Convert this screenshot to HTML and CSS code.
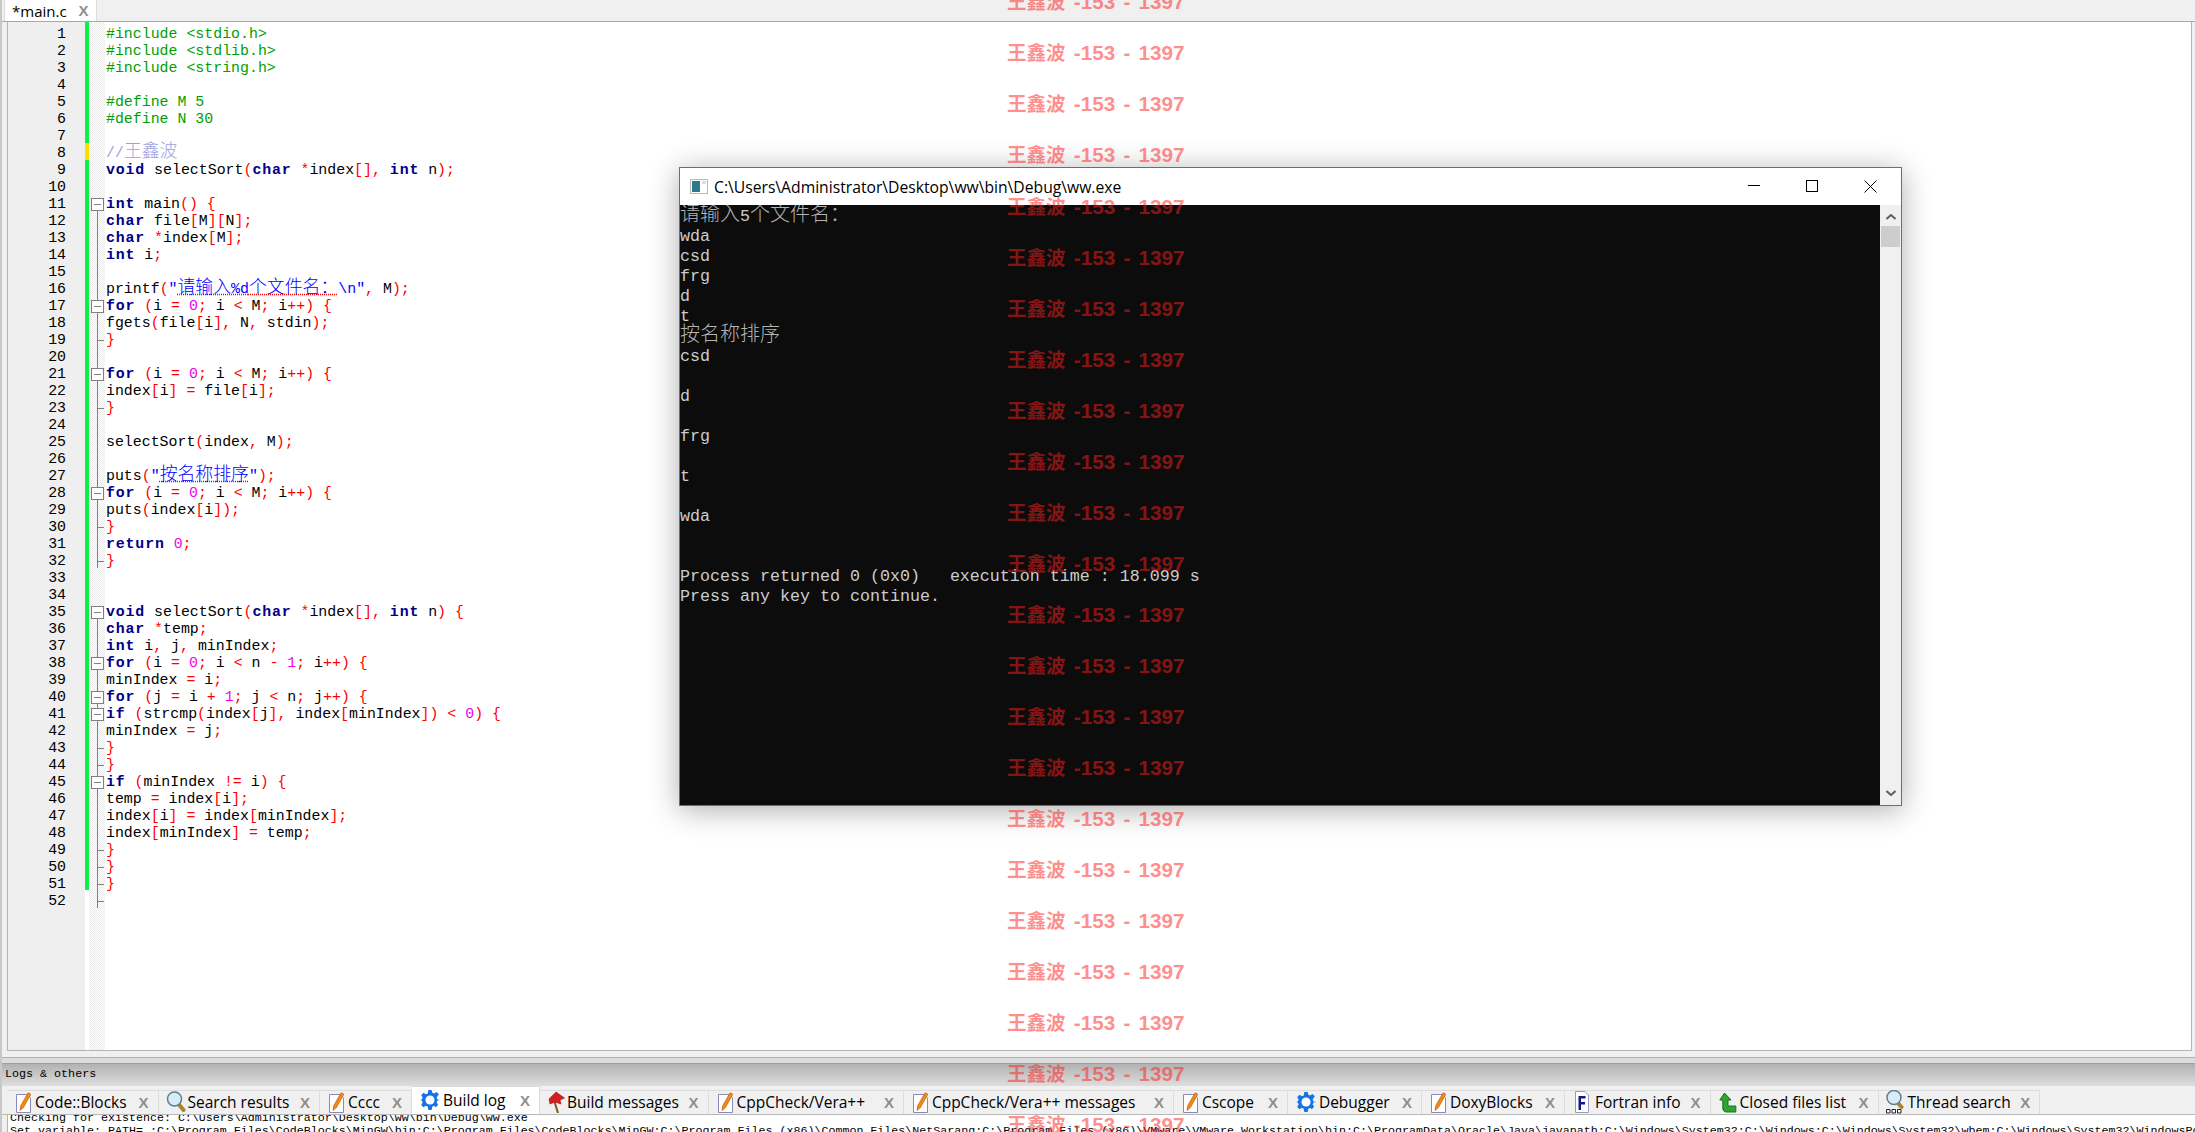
FILE: index.html
```html
<!DOCTYPE html>
<html lang="zh">
<head>
<meta charset="utf-8">
<title>main.c</title>
<link rel="stylesheet" href="styles.css">
</head>
<body>
<svg class="defs" width="0" height="0" aria-hidden="true">
  <symbol id="i-pencil" viewBox="0 0 15 21">
    <path d="M.5 2.500H11l3.500 3.500v14.500H.500z" fill="#fff" stroke="#8a8ab8"/>
    <path d="M12 .800l2.800 1.400L7.500 15.500l-3.500 3 .6-4.500z" fill="#f08a1d" stroke="#c65c00" stroke-width=".7"/>
  </symbol>
  <symbol id="i-gear" viewBox="0 0 24 24">
    <path d="M10 0h4l.7 3.200 2.300 1 2.800-1.800 2.800 2.800L20 9l1 2.300 3 .7v0l-3 .7-1 2.300 1.800 2.800-2.800 2.800L17 19l-2.300 1-.7 4h-4l-.7-4L7 19l-2.800 1.800-2.800-2.800L3.200 15l-1-2.300L0 12l2.200-.7 1-2.300L1.400 6.200l2.800-2.800L7 5.200l2.300-1z" fill="#1473e6"/>
    <circle cx="12" cy="12" r="5.500" fill="#fff"/>
  </symbol>
  <symbol id="i-search" viewBox="0 0 20 22">
    <path d="M12.500 13l5 6" stroke="#a8862a" stroke-width="4" stroke-linecap="round"/>
    <circle cx="8.500" cy="8" r="7" fill="#d8ecf6" stroke="#5e7f95" stroke-width="1.500"/>
  </symbol>
  <symbol id="i-flag" viewBox="0 0 17 22">
    <path d="M6 9l4 13" stroke="#7a5a20" stroke-width="2"/>
    <path d="M1 8l7-7 8.500 6-4.500 2 1 4-6-2-5 2z" fill="#d21f1f" stroke="#9c1010" stroke-width=".6"/>
  </symbol>
  <symbol id="i-fortran" viewBox="0 0 14 22">
    <path d="M.5.500H10l3.500 3.500v17.500H.500z" fill="#fff" stroke="#9a9ab8"/>
    <path d="M3.500 5h7v2.500H6V11h4v2.500H6V19H3.500z" fill="#16168c"/>
  </symbol>
  <symbol id="i-arrow" viewBox="0 0 18 21">
    <path d="M5.500 1L.8 8h3v8c0 2.500 1.500 4 4 4h9v-6H9V8h3z" fill="#2ea52e" stroke="#1c701c"/>
  </symbol>
  <symbol id="i-thread" viewBox="0 0 18 24">
    <path d="M11 12l4.500 5" stroke="#a8862a" stroke-width="4" stroke-linecap="round"/>
    <circle cx="8" cy="7.500" r="7" fill="#d8ecf6" stroke="#5e7f95" stroke-width="1.500"/>
    <path d="M.5 19.500h3.500V23H.500zM6 19.500h3.500V23H6zM11.500 19.500H15V23h-3.500z" fill="#fff" stroke="#222"/>
  </symbol>
</svg>

<div class="ide">
  <div class="top-tabs">
    <div class="file-tab"><span>*main.c</span><b class="file-x">X</b></div>
  </div>

  <div class="editor">
    <div class="gutter" id="gutter"></div>
    <div class="changes"><i class="yellow"></i></div>
    <div class="folds" id="folds"></div>
    <pre class="code"><span class="pp">#include &lt;stdio.h&gt;</span>
<span class="pp">#include &lt;stdlib.h&gt;</span>
<span class="pp">#include &lt;string.h&gt;</span>

<span class="pp">#define M 5</span>
<span class="pp">#define N 30</span>

<span class="cm">//<span class="zh">王鑫波</span></span>
<b>void</b> selectSort<i>(</i><b>char</b> <i>*</i>index<i>[],</i> <b>int</b> n<i>);</i>

<b>int</b> main<i>()</i> <i>{</i>
<b>char</b> file<i>[</i>M<i>][</i>N<i>];</i>
<b>char</b> <i>*</i>index<i>[</i>M<i>];</i>
<b>int</b> i<i>;</i>

printf<i>(</i><span class="st">"<u><span class="zh">请输入</span>%d<span class="zh">个文件名：</span></u>\n"</span><i>,</i> M<i>);</i>
<b>for</b> <i>(</i>i <i>=</i> <em>0</em><i>;</i> i <i>&lt;</i> M<i>;</i> i<i>++)</i> <i>{</i>
fgets<i>(</i>file<i>[</i>i<i>],</i> N<i>,</i> stdin<i>);</i>
<i>}</i>

<b>for</b> <i>(</i>i <i>=</i> <em>0</em><i>;</i> i <i>&lt;</i> M<i>;</i> i<i>++)</i> <i>{</i>
index<i>[</i>i<i>]</i> <i>=</i> file<i>[</i>i<i>];</i>
<i>}</i>

selectSort<i>(</i>index<i>,</i> M<i>);</i>

puts<i>(</i><span class="st">"<u><span class="zh">按名称排序</span></u>"</span><i>);</i>
<b>for</b> <i>(</i>i <i>=</i> <em>0</em><i>;</i> i <i>&lt;</i> M<i>;</i> i<i>++)</i> <i>{</i>
puts<i>(</i>index<i>[</i>i<i>]);</i>
<i>}</i>
<b>return</b> <em>0</em><i>;</i>
<i>}</i>


<b>void</b> selectSort<i>(</i><b>char</b> <i>*</i>index<i>[],</i> <b>int</b> n<i>)</i> <i>{</i>
<b>char</b> <i>*</i>temp<i>;</i>
<b>int</b> i<i>,</i> j<i>,</i> minIndex<i>;</i>
<b>for</b> <i>(</i>i <i>=</i> <em>0</em><i>;</i> i <i>&lt;</i> n <i>-</i> <em>1</em><i>;</i> i<i>++)</i> <i>{</i>
minIndex <i>=</i> i<i>;</i>
<b>for</b> <i>(</i>j <i>=</i> i <i>+</i> <em>1</em><i>;</i> j <i>&lt;</i> n<i>;</i> j<i>++)</i> <i>{</i>
<b>if</b> <i>(</i>strcmp<i>(</i>index<i>[</i>j<i>],</i> index<i>[</i>minIndex<i>])</i> <i>&lt;</i> <em>0</em><i>)</i> <i>{</i>
minIndex <i>=</i> j<i>;</i>
<i>}</i>
<i>}</i>
<b>if</b> <i>(</i>minIndex <i>!=</i> i<i>)</i> <i>{</i>
temp <i>=</i> index<i>[</i>i<i>];</i>
index<i>[</i>i<i>]</i> <i>=</i> index<i>[</i>minIndex<i>];</i>
index<i>[</i>minIndex<i>]</i> <i>=</i> temp<i>;</i>
<i>}</i>
<i>}</i>
<i>}</i>
</pre>
  </div>

  <div class="sash"></div>

  <div class="logs">
    <div class="logs-title">Logs &amp; others</div>
    <div class="log-tabs">
      <div class="ltab"><svg class="ic ic-pencil"><use href="#i-pencil"/></svg><span>Code::Blocks</span><b>X</b></div>
      <div class="ltab"><svg class="ic ic-search"><use href="#i-search"/></svg><span>Search results</span><b>X</b></div>
      <div class="ltab"><svg class="ic ic-pencil"><use href="#i-pencil"/></svg><span>Cccc</span><b>X</b></div>
      <div class="ltab on"><svg class="ic ic-gear"><use href="#i-gear"/></svg><span>Build log</span><b>X</b></div>
      <div class="ltab"><svg class="ic ic-flag"><use href="#i-flag"/></svg><span>Build messages</span><b>X</b></div>
      <div class="ltab"><svg class="ic ic-pencil"><use href="#i-pencil"/></svg><span>CppCheck/Vera++</span><b>X</b></div>
      <div class="ltab"><svg class="ic ic-pencil"><use href="#i-pencil"/></svg><span>CppCheck/Vera++ messages</span><b>X</b></div>
      <div class="ltab"><svg class="ic ic-pencil"><use href="#i-pencil"/></svg><span>Cscope</span><b>X</b></div>
      <div class="ltab"><svg class="ic ic-gear"><use href="#i-gear"/></svg><span>Debugger</span><b>X</b></div>
      <div class="ltab"><svg class="ic ic-pencil"><use href="#i-pencil"/></svg><span>DoxyBlocks</span><b>X</b></div>
      <div class="ltab"><svg class="ic ic-fortran"><use href="#i-fortran"/></svg><span>Fortran info</span><b>X</b></div>
      <div class="ltab"><svg class="ic ic-arrow"><use href="#i-arrow"/></svg><span>Closed files list</span><b>X</b></div>
      <div class="ltab"><svg class="ic ic-thread"><use href="#i-thread"/></svg><span>Thread search</span><b>X</b></div>
    </div>
    <div class="log-out"><pre>Checking for existence: C:\Users\Administrator\Desktop\ww\bin\Debug\ww.exe
Set variable: PATH=.;C:\Program Files\CodeBlocks\MinGW\bin;C:\Program Files\CodeBlocks\MinGW;C:\Program Files (x86)\Common Files\NetSarang;C:\Program Files (x86)\VMware\VMware Workstation\bin;C:\ProgramData\Oracle\Java\javapath;C:\Windows\System32;C:\Windows;C:\Windows\System32\wbem;C:\Windows\System32\WindowsPowerShell\v1.0</pre></div>
  </div>
</div>

<div class="console">
  <div class="con-title">
    <svg class="con-icon" viewBox="0 0 18 15"><rect x=".5" y=".5" width="17" height="14" fill="#fff" stroke="#b8b8b8"/><rect x="2" y="2" width="8" height="11" fill="#2d7a8c"/><rect x="12" y="2" width="4" height="3" fill="#ddd"/></svg>
    <span class="con-name">C:\Users\Administrator\Desktop\ww\bin\Debug\ww.exe</span>
    <svg class="con-btn" viewBox="0 0 13 13"><path d="M0 5.500H12" stroke="#000"/></svg>
    <svg class="con-btn" viewBox="0 0 13 13"><rect x=".5" y=".5" width="11" height="11" fill="none" stroke="#000"/></svg>
    <svg class="con-btn" viewBox="0 0 13 13"><path d="M.5.500l12 12M12.500.500l-12 12" stroke="#000"/></svg>
  </div>
  <div class="con-body">
    <pre class="con-text"><span class="zh-con">请输入</span>5<span class="zh-con">个文件名：</span>
wda
csd
frg
d
t
<span class="zh-con">按名称排序</span>
csd

d

frg

t

wda


Process returned 0 (0x0)   execution time : 18.099 s
Press any key to continue.</pre>
    <div class="con-scroll">
      <svg class="con-arrow" viewBox="0 0 10 6"><path d="M.5 5L5 1l4.500 4" fill="none" stroke="#606060" stroke-width="2"/></svg>
      <div class="con-thumb"></div>
      <div class="con-track"></div>
      <svg class="con-arrow" viewBox="0 0 10 6"><path d="M.5 1L5 5l4.500-4" fill="none" stroke="#606060" stroke-width="2"/></svg>
    </div>
  </div>
</div>

<div class="marks" id="marks"></div>

<script src="app.js"></script>
</body>
</html>
```
FILE: styles.css
```css
* { box-sizing: border-box; }
html, body { margin: 0; height: 100%; overflow: hidden; }
body { background: #f0f0f0; position: relative; width: 2195px; height: 1132px; }
.defs { position: absolute; }
.ide { display: flex; flex-direction: column; height: 1132px; border-left: 2px solid #c8c8c8; }

.top-tabs { height: 22px; background: #f0f0f0; padding-left: 2px; border-bottom: 1px solid #a8a8a8; flex: none; }
.file-tab { width: 93px; height: 21px; background: #fff; display: flex; align-items: center; padding-left: 7px; font: 15px "Open Sans", "Noto Sans", sans-serif; color: #000; border-left: 1px solid #dcdcdc; border-right: 1px solid #dcdcdc; }
.file-x { margin-left: 12px; font: bold 15px "Liberation Sans", sans-serif; color: #8e8e8e; }

.editor { position: relative; margin-left: 5px; margin-right: 3px; height: 1029px; background: #fff; border: 1px solid #b4b4b4; border-width: 0 1px 1px 1px; display: grid; grid-template-columns: 77px 4px 16px 1fr; overflow: hidden; flex: none; }
.gutter { background: #efefef; padding-top: 4px; font: 14.900px/17px "Liberation Mono", monospace; color: #000; text-align: right; padding-right: 19px; white-space: pre; }
.changes { background: linear-gradient(#0df04a, #0df04a) no-repeat 0 0 / 100% 868px; position: relative; }
.changes .yellow { position: absolute; left: 0; right: 0; top: 121px; height: 17px; background: #ffdd00; }
.folds { position: relative; background-color: #fff; background-image: conic-gradient(#eaeaea 25%, #fff 25% 50%, #eaeaea 50% 75%, #fff 75%); background-size: 2px 2px; }
.fold-line { position: absolute; left: 8px; width: 1px; background: #808080; }
.fold-end { position: absolute; left: 8px; width: 7px; height: 1px; background: #808080; }
.fold-box { position: absolute; left: 2px; width: 13px; height: 13px; background: #fff; border: 1px solid #808080; }
.fold-box::after { content: ""; position: absolute; left: 2px; right: 2px; top: 5px; height: 1px; background: #808080; }
.code { margin: 0; padding: 4px 0 0 1px; font: 14.900px/17px "Liberation Mono", "Noto Sans CJK SC", monospace; color: #000; overflow: hidden; }
.code b { color: #00008b; letter-spacing: .85px; }
.code i { font-style: normal; color: #ff0000; }
.code em { font-style: normal; color: #f000f0; }
.pp { color: #00a000; }
.cm { color: #a0a0e0; }
.st { color: #0000ff; }
.st u { text-decoration: underline dotted #ff0000; text-underline-offset: 1px; }
.zh { font-size: 17.860px; font-weight: 300; line-height: 0; }

.sash { height: 6px; background: #f0f0f0; flex: none; }
.logs { flex: 1; display: flex; flex-direction: column; border-top: 1px solid #b0b0b0; min-height: 0; }
.logs-title { height: 28px; flex: none; border-top: 5px solid #dcdcdc; background: linear-gradient(#b0b0b0, #dedede); box-shadow: inset 0 1px #a0a0a0; font: 11.700px/23px "Liberation Mono", monospace; color: #000; padding-left: 3px; }
.log-tabs { height: 29px; flex: none; background: #f0f0f0; padding-left: 5px; display: grid; grid-template-columns: 151.500px 161.500px 92px 128px 168.500px 195.400px 270px 114px 134px 143px 145.700px 168px 161.700px; justify-content: start; align-items: end; border-bottom: 1px solid #b8b8b8; }
.ltab { height: 24px; display: flex; align-items: center; gap: 3px; padding: 0 9px 1px 8px; background: #f0f0f0; border: 1px solid #dcdcdc; border-width: 1px 1px 0 0; font: 15.500px "Open Sans", "Noto Sans", sans-serif; color: #000; white-space: nowrap; }
.ltab.on { height: 28px; background: #fff; }
.ltab span { flex: 1; }
.ltab b { font: bold 15px "Liberation Sans", sans-serif; color: #8e8e8e; }
.ic { flex: none; height: 22px; width: 16px; }
.ic-pencil { width: 15px; height: 21px; margin: 0 1px 0 1px; }
.ic-gear { width: 20px; height: 20px; }
.ic-search { width: 20px; height: 22px; margin: 0 -1px; }
.ic-flag { width: 17px; height: 22px; margin-right: -1px; }
.ic-fortran { width: 14px; height: 22px; margin: 0 3px 0 2px; }
.ic-arrow { width: 18px; height: 21px; }
.ic-thread { width: 18px; height: 24px; margin: 0 1px 0 -1px; }
.log-out { flex: 1; background: #fff; overflow: hidden; margin-left: 5px; border-left: 1px solid #b4b4b4; }
.log-out pre { margin: -3px 0 0 2px; font: 11.670px/13px "Liberation Mono", monospace; color: #000; white-space: pre; }

.console { position: absolute; left: 679px; top: 167px; width: 1223px; height: 639px; border: 1px solid #6e6e6e; background: #fff; box-shadow: 0 4px 28px rgba(0,0,0,.32); display: flex; flex-direction: column; }
.con-title { height: 37px; flex: none; display: flex; align-items: center; padding: 0 24px 0 10px; background: #fff; }
.con-icon { width: 18px; height: 15px; flex: none; }
.con-name { flex: 1; margin-left: 6px; font: 15.700px "Open Sans", "Noto Sans", sans-serif; color: #000; }
.con-btn { width: 13px; height: 13px; flex: none; margin-left: 45px; }
.con-body { flex: 1; display: flex; min-height: 0; }
.con-text { margin: 0; padding-top: 2px; flex: 1; background: #0c0c0c; color: #cccccc; font: 16.670px/20px "Liberation Mono", "Noto Sans CJK SC", monospace; overflow: hidden; }
.zh-con { font-size: 20px; font-weight: 300; color: #b4b4b4; line-height: 0; }
.con-scroll { width: 21px; flex: none; background: #f0f0f0; display: flex; flex-direction: column; align-items: center; padding: 9px 1px; }
.con-arrow { width: 10px; height: 6px; flex: none; }
.con-thumb { width: 19px; height: 21px; background: #cdcdcd; margin-top: 6px; flex: none; }
.con-track { flex: 1; }

.marks { position: absolute; inset: 0; overflow: hidden; pointer-events: none; }
.mark { position: absolute; left: 1007px; white-space: nowrap; font: bold 20.700px/26px "Liberation Sans", "Noto Sans CJK SC", sans-serif; word-spacing: 2.500px; color: rgba(255,30,30,.52); }
.mark .zh-mark { font-size: 19.500px; }
```
FILE: app.js
```js
// Repetitive, data-driven bits: line numbers, fold markers, watermark rows.
var LINE = 17;
var gutter = document.getElementById('gutter');
var nums = [];
for (var n = 1; n <= 52; n++) nums.push(n);
gutter.textContent = nums.join('\n');

var folds = document.getElementById('folds');
function add(cls, top, h) {
  var d = document.createElement('div');
  d.className = cls;
  d.style.top = top + 'px';
  if (h) d.style.height = h + 'px';
  folds.appendChild(d);
}
[[11, 32], [35, 52]].forEach(function (r) {
  add('fold-line', (r[0] - 1) * LINE + 11, (r[1] - r[0]) * LINE + 8);
});
[19, 23, 30, 32, 43, 44, 49, 50, 51, 52].forEach(function (l) {
  add('fold-end', (l - 1) * LINE + 12);
});
[11, 17, 21, 28, 35, 38, 40, 41, 45].forEach(function (l) {
  add('fold-box', (l - 1) * LINE + 6);
});

var marks = document.getElementById('marks');
for (var k = -4; k <= 18; k++) {
  var m = document.createElement('div');
  m.className = 'mark';
  m.style.top = Math.round(206.5 + 51.03 * k - 13) + 'px';
  m.innerHTML = '<span class="zh-mark">王鑫波</span> -153 - 1397';
  marks.appendChild(m);
}
```
